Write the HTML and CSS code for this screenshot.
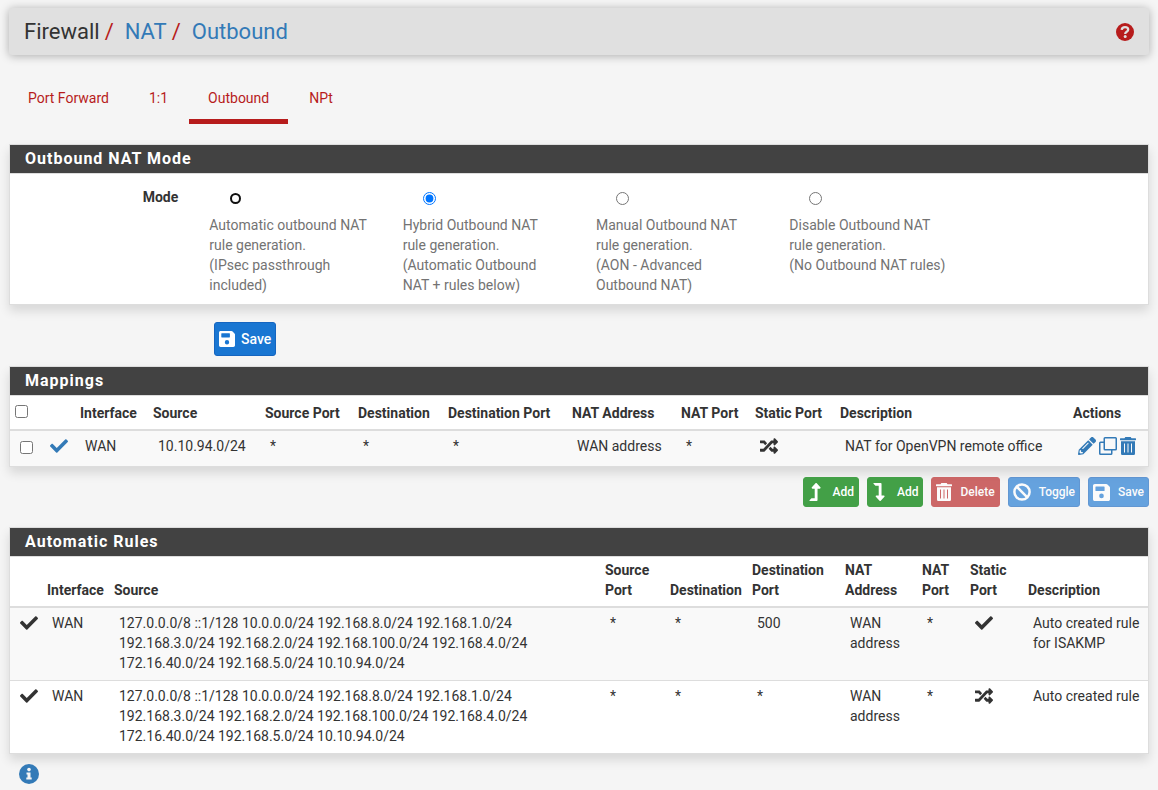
FILE: index.html
```html
<!DOCTYPE html>
<html lang="en">
<head>
<meta charset="utf-8">
<meta name="viewport" content="width=device-width, initial-scale=1">
<title>Firewall: NAT: Outbound</title>
<link rel="stylesheet" href="styles.css">
</head>
<body>
<svg class="sprite" aria-hidden="true">
  <symbol id="check" viewBox="0 0 512 512"><path d="M173.898 439.404l-166.4-166.4c-9.997-9.997-9.997-26.206 0-36.204l36.203-36.204c9.997-9.998 26.207-9.998 36.204 0L192 312.69 432.095 72.596c9.997-9.997 26.207-9.997 36.204 0l36.203 36.204c9.997 9.997 9.997 26.206 0 36.204l-294.4 294.401c-9.998 9.997-26.207 9.997-36.204-.001z"/></symbol>
  <symbol id="shuffle" viewBox="0 0 512 512"><path d="M504.971 359.029c9.373 9.373 9.373 24.569 0 33.941l-80 79.984c-15.01 15.01-40.971 4.49-40.971-16.971V416h-58.785a12.004 12.004 0 0 1-8.773-3.812l-70.556-75.596 53.333-57.143L352 336h32v-39.981c0-21.438 25.943-31.998 40.971-16.971l80 79.981zM12 176h84l52.781 56.551 53.333-57.143-70.556-75.596A11.999 11.999 0 0 0 122.785 96H12c-6.627 0-12 5.373-12 12v56c0 6.627 5.373 12 12 12zm372 0v39.984c0 21.46 25.961 31.98 40.971 16.971l80-79.984c9.373-9.373 9.373-24.569 0-33.941l-80-79.981C409.943 24.021 384 34.582 384 56.019V96h-58.785a12.004 12.004 0 0 0-8.773 3.812L96 336H12c-6.627 0-12 5.373-12 12v56c0 6.627 5.373 12 12 12h110.785c3.326 0 6.503-1.381 8.773-3.812L352 176h32z"/></symbol>
  <symbol id="pencil" viewBox="0 0 512 512"><path d="M497.9 142.1l-46.1 46.1c-4.7 4.7-12.3 4.7-17 0l-111-111c-4.7-4.7-4.7-12.3 0-17l46.1-46.1c18.7-18.7 49.1-18.7 67.9 0l60.1 60.1c18.8 18.7 18.8 49.1 0 67.9zM284.2 99.8L21.6 362.4.4 483.9c-2.9 16.4 11.4 30.6 27.8 27.8l121.5-21.3 262.6-262.6c4.7-4.7 4.7-12.3 0-17l-111-111c-4.8-4.7-12.4-4.7-17.1 0zM124.1 339.9c-5.5-5.5-5.5-14.3 0-19.8l154-154c5.5-5.5 14.3-5.5 19.8 0s5.5 14.3 0 19.8l-154 154c-5.5 5.5-14.3 5.5-19.8 0zM88 424h48v36.3l-64.5 11.3-31.1-31.1L51.7 376H88v48z"/></symbol>
  <symbol id="clone" viewBox="0 0 18 18"><path fill="none" stroke="currentColor" stroke-width="1.5" d="M6 .75h10.5a.75.75 0 0 1 .75.75V12a.75.75 0 0 1-.75.75H6a.75.75 0 0 1-.75-.75V1.500A.75.75 0 0 1 6 .75zM5 5.250H1.500a.75.75 0 0 0-.75.75v10.500c0 .4.300.75.75.75H12a.75.75 0 0 0 .75-.75V13"/></symbol>
  <symbol id="trash" viewBox="0 0 16 18"><path fill-rule="evenodd" d="M.5 1.200h4L5.300 0h5.400l.8 1.200h4c.3 0 .5.200.5.500v1.100c0 .2-.2.400-.5.400H.5c-.3 0-.5-.2-.5-.4V1.700c0-.3.200-.5.500-.5zM1 4.200h14v12.200c0 .9-.7 1.600-1.600 1.600H2.600C1.700 18 1 17.300 1 16.400zM4 6.500v9h1v-9zm3.500 0v9h1v-9zm3.500 0v9h1v-9z"/></symbol>
  <symbol id="turn-up" viewBox="0 0 320 512"><path d="M313.553 119.669L209.587 7.666c-9.485-10.214-25.676-10.229-35.174 0L70.438 119.669C56.232 134.969 67.062 160 88.025 160H152v272H68.024a11.996 11.996 0 0 0-8.485 3.515l-56 56C-4.021 499.074 1.333 512 12.024 512H208c13.255 0 24-10.745 24-24V160h63.966c20.878 0 31.851-24.969 17.587-40.331z"/></symbol>
  <symbol id="turn-down" viewBox="0 0 320 512"><path transform="matrix(1 0 0 -1 0 512)" d="M313.553 119.669L209.587 7.666c-9.485-10.214-25.676-10.229-35.174 0L70.438 119.669C56.232 134.969 67.062 160 88.025 160H152v272H68.024a11.996 11.996 0 0 0-8.485 3.515l-56 56C-4.021 499.074 1.333 512 12.024 512H208c13.255 0 24-10.745 24-24V160h63.966c20.878 0 31.851-24.969 17.587-40.331z"/></symbol>
  <symbol id="ban" viewBox="0 0 18 18"><g fill="none" stroke="currentColor" stroke-width="2.500"><circle cx="9" cy="9" r="7.600"/><path d="M3.700 3.700l10.600 10.600"/></g></symbol>
  <symbol id="floppy" viewBox="0 0 16 16"><path fill-rule="evenodd" d="M1.700 0h10.700c.5 0 .9.200 1.200.5l1.900 1.900c.3.300.5.700.5 1.200v10.700c0 1-.7 1.700-1.700 1.700H1.700C.7 16 0 15.300 0 14.300V1.700C0 .7.700 0 1.700 0zM2.800 2.300c-.3 0-.5.200-.5.500v3.300c0 .3.200.5.500.5h7.600c.3 0 .5-.2.5-.5V2.800c0-.3-.2-.5-.5-.5zM8 9a2.200 2.200 0 1 0 0 4.400A2.200 2.200 0 0 0 8 9z"/></symbol>
  <symbol id="question" viewBox="0 0 18 18"><circle cx="9" cy="9" r="9"/><path fill="none" stroke="#e0e0e0" stroke-width="2.300" d="M5.700 6.900C5.900 5 7.200 4.200 9 4.200c1.900 0 3.200 1 3.200 2.500 0 2.200-3 2-3 4.200"/><circle cx="9.200" cy="13.600" r="1.500" fill="#e0e0e0"/></symbol>
  <symbol id="info" viewBox="0 0 20 20"><circle cx="10" cy="10" r="10"/><circle cx="10" cy="5.600" r="1.800" fill="#f5f5f5"/><path fill="#f5f5f5" d="M7.500 8.500h4v5h1.200v2H7.300v-2h1.200v-3h-1z"/></symbol>
</svg>

<header class="page-header">
  <nav class="breadcrumb" aria-label="Breadcrumb">
    <span>Firewall</span><i>/</i><a href="#">NAT</a><i>/</i><a href="#">Outbound</a>
  </nav>
  <a class="help" href="#" aria-label="Help"><svg class="icon"><use href="#question"/></svg></a>
</header>

<nav class="tabs" aria-label="NAT sections">
  <a href="#">Port Forward</a>
  <a href="#">1:1</a>
  <a href="#" class="active" aria-current="page">Outbound</a>
  <a href="#">NPt</a>
</nav>

<main>
<form>
  <section class="panel">
    <h2>Outbound NAT Mode</h2>
    <div class="mode" role="radiogroup" aria-labelledby="mode-label">
      <span class="mode-label" id="mode-label">Mode</span>
      <label class="option"><input class="focused" type="radio" name="mode"><span>Automatic outbound NAT rule generation.<br>(IPsec passthrough included)</span></label>
      <label class="option"><input type="radio" name="mode" checked><span>Hybrid Outbound NAT rule generation.<br>(Automatic Outbound NAT + rules below)</span></label>
      <label class="option"><input type="radio" name="mode"><span>Manual Outbound NAT rule generation.<br>(AON - Advanced Outbound NAT)</span></label>
      <label class="option"><input type="radio" name="mode"><span>Disable Outbound NAT rule generation.<br>(No Outbound NAT rules)</span></label>
    </div>
  </section>
  <div class="form-actions">
    <button class="btn primary" type="button"><svg class="icon"><use href="#floppy"/></svg>Save</button>
  </div>
</form>

<section class="panel">
  <h2>Mappings</h2>
  <table class="mappings">
    <colgroup><col class="w30"><col class="w35"><col class="w73"><col class="w112"><col class="w93"><col class="w90"><col class="w124"><col class="w109"><col class="w74"><col class="w85"><col><col class="w80"></colgroup>
    <thead>
      <tr><th><input type="checkbox" aria-label="Select all"></th><th></th><th>Interface</th><th>Source</th><th>Source Port</th><th>Destination</th><th>Destination Port</th><th>NAT Address</th><th>NAT Port</th><th>Static Port</th><th>Description</th><th>Actions</th></tr>
    </thead>
    <tbody>
      <tr>
        <td><input type="checkbox" aria-label="Select rule"></td>
        <td><a href="#" aria-label="Disable rule"><svg class="icon"><use href="#check"/></svg></a></td>
        <td>WAN</td><td>10.10.94.0/24</td><td>*</td><td>*</td><td>*</td><td>WAN address</td><td>*</td>
        <td><svg class="icon"><use href="#shuffle"/></svg></td>
        <td>NAT for OpenVPN remote office</td>
        <td><div class="row-actions">
          <a href="#" aria-label="Edit"><svg class="icon"><use href="#pencil"/></svg></a>
          <a href="#" aria-label="Copy"><svg class="icon"><use href="#clone"/></svg></a>
          <a href="#" aria-label="Delete"><svg class="icon bin"><use href="#trash"/></svg></a>
        </div></td>
      </tr>
    </tbody>
  </table>
</section>

<div class="toolbar">
  <button class="btn small success" type="button"><svg class="icon turn"><use href="#turn-up"/></svg>Add</button>
  <button class="btn small success" type="button"><svg class="icon turn"><use href="#turn-down"/></svg>Add</button>
  <button class="btn small danger" type="button" disabled><svg class="icon bin"><use href="#trash"/></svg>Delete</button>
  <button class="btn small primary" type="button" disabled><svg class="icon"><use href="#ban"/></svg>Toggle</button>
  <button class="btn small primary" type="button" disabled><svg class="icon disk"><use href="#floppy"/></svg>Save</button>
</div>

<section class="panel">
  <h2>Automatic Rules</h2>
  <table class="automatic">
    <colgroup><col class="w32"><col class="w67"><col><col class="w65"><col class="w82"><col class="w93"><col class="w77"><col class="w48"><col class="w58"><col class="w125"></colgroup>
    <thead>
      <tr><th></th><th>Interface</th><th>Source</th><th>Source Port</th><th>Destination</th><th>Destination Port</th><th>NAT Address</th><th>NAT Port</th><th>Static Port</th><th>Description</th></tr>
    </thead>
    <tbody>
      <tr>
        <td><svg class="icon"><use href="#check"/></svg></td><td>WAN</td>
        <td>127.0.0.0/8 ::1/128 10.0.0.0/24 192.168.8.0/24 192.168.1.0/24 192.168.3.0/24 192.168.2.0/24 192.168.100.0/24 192.168.4.0/24 172.16.40.0/24 192.168.5.0/24 10.10.94.0/24</td>
        <td>*</td><td>*</td><td>500</td><td>WAN address</td><td>*</td>
        <td><svg class="icon"><use href="#check"/></svg></td><td>Auto created rule for ISAKMP</td>
      </tr>
      <tr>
        <td><svg class="icon"><use href="#check"/></svg></td><td>WAN</td>
        <td>127.0.0.0/8 ::1/128 10.0.0.0/24 192.168.8.0/24 192.168.1.0/24 192.168.3.0/24 192.168.2.0/24 192.168.100.0/24 192.168.4.0/24 172.16.40.0/24 192.168.5.0/24 10.10.94.0/24</td>
        <td>*</td><td>*</td><td>*</td><td>WAN address</td><td>*</td>
        <td><svg class="icon"><use href="#shuffle"/></svg></td><td>Auto created rule</td>
      </tr>
    </tbody>
  </table>
</section>
<button class="info" type="button" aria-label="Information"><svg class="icon"><use href="#info"/></svg></button>
</main>
</body>
</html>
```
FILE: styles.css
```css
* { box-sizing: border-box; }

body {
  margin: 0;
  padding: 8px 9px 0;
  background: #f5f5f5;
  color: #333;
  font: 14px/20px Roboto, "Liberation Sans", sans-serif;
}

a { color: #337ab7; text-decoration: none; }

.sprite { display: none; }

.icon {
  display: block;
  width: 18px;
  height: 18px;
  flex: none;
  fill: currentColor;
}
.icon.bin { width: 16px; }

.page-header {
  display: flex;
  align-items: center;
  justify-content: space-between;
  height: 47px;
  padding: 0 15px;
  border-radius: 3px;
  background: #e0e0e0;
  box-shadow: 0 1px 10px rgba(0, 0, 0, .3);
}
.breadcrumb { display: flex; font-size: 22px; line-height: 30px; }
.breadcrumb i { margin: 0 11px 0 5px; color: #b71c1c; font-style: normal; }
.help { color: #b71c1c; }

.tabs { display: flex; gap: 2px; margin: 23px 0 20px; }
.tabs a {
  padding: 10px 19px 11px;
  border-bottom: 5px solid transparent;
  color: #b71c1c;
}
.tabs .active { border-color: #b71c1c; }

.panel {
  border: 1px solid #ddd;
  background: #fff;
  box-shadow: 0 6px 10px rgba(0, 0, 0, .12);
}
.panel h2 {
  margin: 0;
  padding: 4px 15px;
  border-bottom: 1px solid #ddd;
  background: #424242;
  color: #fff;
  font-size: 16px;
  line-height: 20px;
  letter-spacing: 1px;
}

.mode {
  display: grid;
  grid-template-columns: 184fr repeat(4, 193fr) 180fr;
  padding: 13px 0 9px;
}
.mode-label { padding-right: 16px; font-weight: 700; text-align: right; }
.option { padding: 5px 20px 0 15px; color: #737373; }
.option input { display: block; width: 13px; height: 13px; margin: 0 0 10px 20px; }
.option span { display: block; }
.option .focused {
  width: 11px;
  height: 11px;
  margin: 1px 0 11px 21px;
  border: 2px solid #101010;
  border-radius: 50%;
  background: #fff;
  appearance: none;
}

.form-actions { padding: 17px 0 10px 205px; }

.btn {
  display: flex;
  align-items: center;
  gap: 6px;
  height: 34px;
  padding: 0 4px;
  border: 1px solid #1565c0;
  border-radius: 3px;
  background: #1976d2;
  color: #fff;
  font: 500 14px/20px Roboto, "Liberation Sans", sans-serif;
}
.btn .icon { width: 16px; height: 16px; }
.btn.small { gap: 8px; height: 30px; font-size: 12px; }
.btn.small .icon { width: 18px; height: 18px; }
.btn.small .icon.turn { width: 12px; margin: 0 4px 0 1px; }
.btn.small .icon.bin { width: 16px; }
.btn.small .icon.disk { width: 17px; height: 17px; }
.btn.success { border-color: #43a047; background: #43a047; }
.btn.danger { border-color: #b71c1c; background: #b71c1c; }
.btn:disabled { opacity: .65; }

table { width: 100%; border-collapse: collapse; table-layout: fixed; }
th { padding: 3px 5px 6px; text-align: left; vertical-align: bottom; font-weight: 700; }
td { padding: 5px 5px 7px 10px; vertical-align: top; }
thead tr { border-bottom: 2px solid #ddd; }
tbody tr + tr { border-top: 1px solid #ddd; }
tbody tr:nth-child(odd) { background: #f9f9f9; }
td .icon { margin-top: 1px; }
th input, td input { display: block; width: 13px; height: 13px; margin: 5px 0 0; }
.mappings th { padding: 7px 5px 6px; }
.mappings th input { margin: 0 0 5px; }
.mappings td { padding-bottom: 10px; }
.mappings td:last-child { padding-right: 0; }
.row-actions { display: flex; gap: 3px; }

.w30 { width: 30px; }
.w32 { width: 32px; }
.w35 { width: 35px; }
.w48 { width: 48px; }
.w58 { width: 58px; }
.w65 { width: 65px; }
.w67 { width: 67px; }
.w73 { width: 73px; }
.w74 { width: 74px; }
.w77 { width: 77px; }
.w80 { width: 80px; }
.w82 { width: 82px; }
.w85 { width: 85px; }
.w90 { width: 90px; }
.w93 { width: 93px; }
.w109 { width: 109px; }
.w112 { width: 112px; }
.w124 { width: 124px; }
.w125 { width: 125px; }

.toolbar { display: flex; justify-content: flex-end; gap: 8px; padding: 10px 0 20px; }

.info {
  display: block;
  margin: 10px 0 0 10px;
  padding: 0;
  border: 0;
  background: none;
  color: #337ab7;
}
.info .icon { width: 20px; height: 20px; }
```
